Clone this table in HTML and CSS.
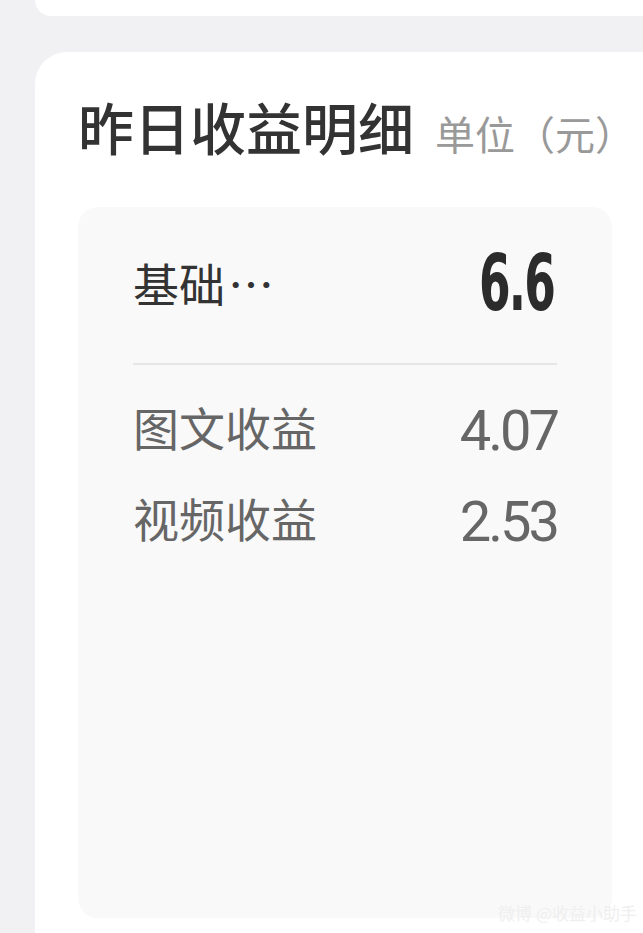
FILE: index.html
```html
<!DOCTYPE html>
<html>
<head>
  <meta charset="utf-8">
  <title>昨日收益明细</title>
  <link rel="stylesheet" href="styles.css">
</head>
<body>
  <div class="top-card"></div>
  <div class="card">
    <div class="card-head">
      <span class="card-title">昨日收益明细</span>
      <span class="card-unit">单位（元）</span>
    </div>
    <div class="detail-panel">
      <div class="row row-total">
        <span class="label">基础<span class="dots">⋯</span></span>
        <span class="total-value">6.6</span>
      </div>
      <div class="divider"></div>
      <div class="sub-rows">
        <div class="row row-sub">
          <span class="label">图文收益</span>
          <span class="value">4.07</span>
        </div>
        <div class="row row-sub">
          <span class="label">视频收益</span>
          <span class="value">2.53</span>
        </div>
      </div>
    </div>
  </div>
  <div class="watermark">微博 @收益小助手</div>
</body>
</html>
```

FILE: styles.css
```css
/* page */
body {
  margin: 0;
  background-color: #f1f1f3;
  font-family: "Noto Sans CJK SC", "Noto Sans", sans-serif;
  width: 643px;
  height: 933px;
  overflow: hidden;
  position: relative;
}

/* tail of the card above */
.top-card {
  margin-left: 35px;
  height: 16px;
  background-color: #fff;
  border-bottom-left-radius: 30px;
}

/* the earnings card */
.card {
  margin-top: 36px;
  margin-left: 35px;
  background-color: #fff;
  border-top-left-radius: 32px;
  padding: 46px 31px 40px 43px;
}
.card-head {
  display: flex;
  align-items: baseline;
  white-space: nowrap;
  height: 56px;
  line-height: 56px;
}
.card-title {
  font-size: 56px;
  font-weight: 500;
  color: #333;
}
.card-unit {
  margin-left: 21px;
  font-size: 40px;
  color: #999;
}

/* grey panel */
.detail-panel {
  margin-top: 53px;
  height: 711px;
  background-color: #f9f9f9;
  border-radius: 20px;
  padding: 0 55px;
}
.row {
  display: flex;
  align-items: center;
  justify-content: space-between;
}
.row-total {
  height: 156px;
}
.label {
  font-size: 46px;
  color: #333;
  line-height: 1;
  margin-top: -6px;
}
.dots {
  margin-left: 3px;
  letter-spacing: 2px;
}
.row-sub .label {
  color: #666;
}
.total-value {
  font-family: "Liberation Sans Narrow", "DejaVu Sans Condensed", sans-serif;
  font-weight: 700;
  font-size: 79px;
  line-height: 1;
  color: #2b2b2b;
  letter-spacing: -3px;
  transform: scaleX(0.64);
  transform-origin: right center;
  margin-right: 3px;
  margin-top: -4px;
}
.divider {
  height: 2px;
  background-color: #e6e6e6;
}
.sub-rows {
  padding-top: 18px;
}
.row-sub {
  height: 91px;
}
.value {
  font-family: Roboto, "Liberation Sans", sans-serif;
  font-size: 56px;
  line-height: 1;
  color: #666;
  letter-spacing: -3px;
  margin-top: 4px;
}

/* faint watermark in the corner */
.watermark {
  position: absolute;
  right: 6px;
  bottom: 8px;
  font-size: 17px;
  color: #efefef;
  white-space: nowrap;
}
```
